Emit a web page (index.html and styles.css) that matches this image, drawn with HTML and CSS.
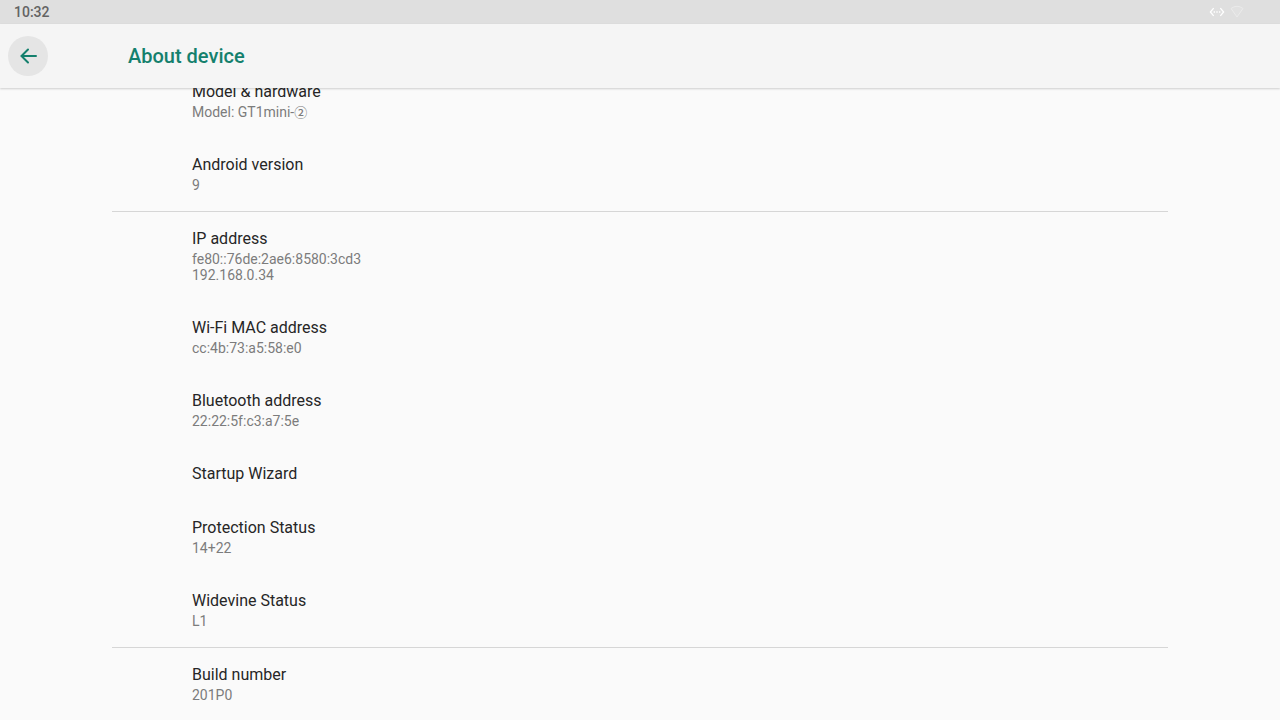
FILE: index.html
```html
<!DOCTYPE html>
<html lang="en">
<head>
<meta charset="utf-8">
<title>About device</title>
<link rel="stylesheet" href="styles.css">
</head>
<body>
<div class="screen">
  <div class="status-bar">
    <time class="clock">10:32</time>
    <div class="status-icons">
      <svg width="16" height="16" viewBox="0 0 24 24" fill="#fff"><path d="M7.77 6.76 6.23 5.48.82 12l5.41 6.52 1.54-1.28L3.42 12l4.35-5.24zM7 13h2v-2H7v2zm10-2h-2v2h2v-2zm-6 2h2v-2h-2v2zm6.77-7.52-1.54 1.28L20.58 12l-4.35 5.24 1.54 1.28L23.18 12l-5.41-6.52z"/></svg>
      <svg width="16" height="16" viewBox="0 0 16 16" fill="#e1e1e1" stroke="#ebebeb" stroke-linejoin="round"><path d="M2 4.500Q8 0 14 4.500L8 13Z"/></svg>
    </div>
  </div>
  <header class="app-bar">
    <button class="back" aria-label="Navigate up">
      <svg width="24" height="24" viewBox="0 0 24 24" fill="none" stroke="#14806d" stroke-width="2" stroke-linecap="round"><path d="M5.500 12H20M12 5.500L5.500 12L12 18.500"/></svg>
    </button>
    <h1 class="title">About device</h1>
  </header>
  <main class="content">
    <section class="group first">
      <div class="item"><h2>Model &amp; hardware</h2><p>Model: GT1mini-<span class="circled">②</span></p></div>
      <div class="item"><h2>Android version</h2><p>9</p></div>
    </section>
    <section class="group">
      <div class="item"><h2>IP address</h2><p>fe80::76de:2ae6:8580:3cd3<br>192.168.0.34</p></div>
      <div class="item"><h2>Wi-Fi MAC address</h2><p>cc:4b:73:a5:58:e0</p></div>
      <div class="item"><h2>Bluetooth address</h2><p>22:22:5f:c3:a7:5e</p></div>
      <div class="item"><h2>Startup Wizard</h2></div>
      <div class="item"><h2>Protection Status</h2><p>14+22</p></div>
      <div class="item"><h2>Widevine Status</h2><p>L1</p></div>
    </section>
    <section class="group">
      <div class="item"><h2>Build number</h2><p>201P0</p></div>
    </section>
  </main>
</div>
</body>
</html>
```
FILE: styles.css
```css
* { box-sizing: border-box; }
body { margin: 0; background: #fafafa; font-family: Roboto, "Noto Sans CJK JP", sans-serif; }
h1, h2, p { margin: 0; }
.screen { height: 100vh; display: flex; flex-direction: column; overflow: hidden; }
.status-bar { flex: none; height: 24px; padding: 0 35px 0 14px; background: #dfdfdf; display: flex; align-items: center; justify-content: space-between; }
.clock { font-size: 14px; font-weight: 500; color: #636363; }
.status-icons { display: flex; align-items: center; gap: 4px; }
.app-bar { flex: none; height: 64px; padding-left: 8px; background: #f5f5f5; box-shadow: 0 1px 2px rgba(0,0,0,.18); display: flex; align-items: center; gap: 80px; z-index: 1; }
.back { width: 40px; height: 40px; padding: 0; border: 0; border-radius: 50%; background: #e5e5e5; display: grid; place-items: center; }
.title { font-size: 20px; line-height: 24px; font-weight: 500; color: #14806d; }
.content { flex: 1; min-height: 0; overflow: hidden; padding: 0 112px; }
.group { padding-left: 80px; border-top: 1px solid #d6d6d6; }
.group.first { border-top: 0; margin-top: -23px; }
.item { padding: 16px 0; }
.item h2 { font-size: 16px; line-height: 22px; font-weight: 400; color: #262626; }
.item p { font-size: 14px; line-height: 16px; padding: 1px 0 2px; color: #7c7c7c; }
.circled { font-size: 13px; line-height: 1; font-weight: 500; }
```
